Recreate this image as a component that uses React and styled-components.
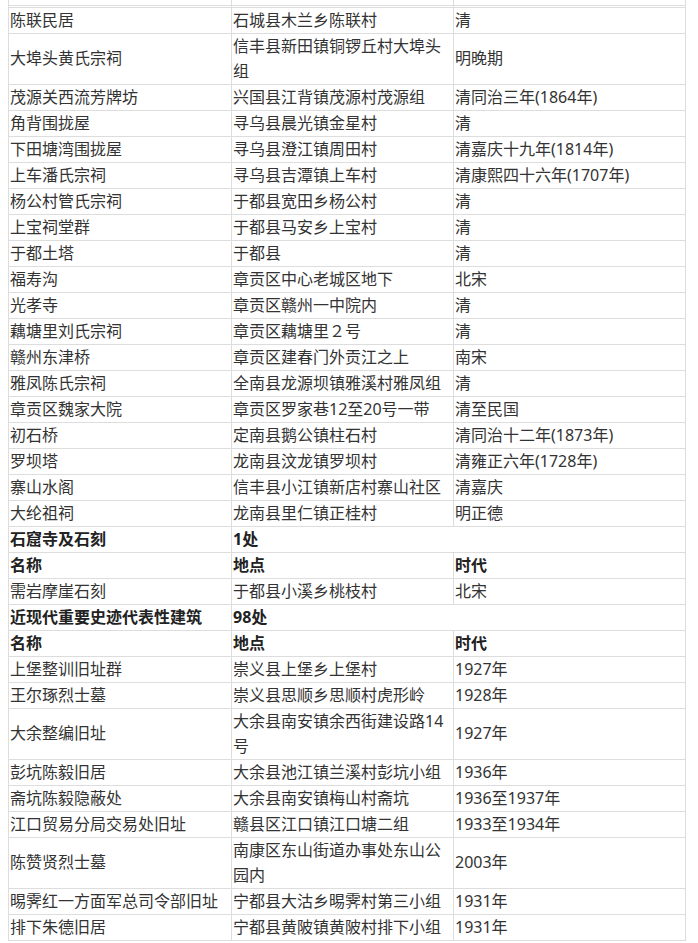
import styled, { createGlobalStyle } from "styled-components";

const GlobalStyle = createGlobalStyle`
  html, body {
    margin: 0;
    padding: 0;
    background: #fff;
  }
  body {
    font-family: "Noto Sans", "Noto Sans CJK SC", sans-serif;
    color: #333;
  }
`;

const Page = styled.div`
  padding: 0 13px 0 8px;
`;

const Table = styled.table`
  width: 677px;
  border-collapse: collapse;
  table-layout: fixed;
  font-size: 16px;
  line-height: 25px;
`;

const Cell = styled.td`
  border: 1px solid #ddd;
  padding: 0 0 0 1px;
  vertical-align: middle;
  font-weight: ${(p) => (p.$bold ? 700 : 400)};
  color: ${(p) => (p.$bold ? "#222" : "#333")};
  word-break: break-all;
`;

const StubRow = styled.tr`
  height: ${(p) => p.$h}px;
  td {
    border: 1px solid #ddd;
    border-top: none;
    padding: 0;
    line-height: 0;
  }
`;

const firstGroup = [
  ["陈联民居", "石城县木兰乡陈联村", "清"],
  ["大埠头黄氏宗祠", "信丰县新田镇铜锣丘村大埠头组", "明晚期"],
  ["茂源关西流芳牌坊", "兴国县江背镇茂源村茂源组", "清同治三年(1864年)"],
  ["角背围拢屋", "寻乌县晨光镇金星村", "清"],
  ["下田塘湾围拢屋", "寻乌县澄江镇周田村", "清嘉庆十九年(1814年)"],
  ["上车潘氏宗祠", "寻乌县吉潭镇上车村", "清康熙四十六年(1707年)"],
  ["杨公村管氏宗祠", "于都县宽田乡杨公村", "清"],
  ["上宝祠堂群", "于都县马安乡上宝村", "清"],
  ["于都土塔", "于都县", "清"],
  ["福寿沟", "章贡区中心老城区地下", "北宋"],
  ["光孝寺", "章贡区赣州一中院内", "清"],
  ["藕塘里刘氏宗祠", "章贡区藕塘里２号", "清"],
  ["赣州东津桥", "章贡区建春门外贡江之上", "南宋"],
  ["雅凤陈氏宗祠", "全南县龙源坝镇雅溪村雅凤组", "清"],
  ["章贡区魏家大院", "章贡区罗家巷12至20号一带", "清至民国"],
  ["初石桥", "定南县鹅公镇柱石村", "清同治十二年(1873年)"],
  ["罗坝塔", "龙南县汶龙镇罗坝村", "清雍正六年(1728年)"],
  ["寨山水阁", "信丰县小江镇新店村寨山社区", "清嘉庆"],
  ["大纶祖祠", "龙南县里仁镇正桂村", "明正德"],
];

const stoneGroup = [["需岩摩崖石刻", "于都县小溪乡桃枝村", "北宋"]];

const modernGroup = [
  ["上堡整训旧址群", "崇义县上堡乡上堡村", "1927年"],
  ["王尔琢烈士墓", "崇义县思顺乡思顺村虎形岭", "1928年"],
  ["大余整编旧址", "大余县南安镇余西街建设路14号", "1927年"],
  ["彭坑陈毅旧居", "大余县池江镇兰溪村彭坑小组", "1936年"],
  ["斋坑陈毅隐蔽处", "大余县南安镇梅山村斋坑", "1936至1937年"],
  ["江口贸易分局交易处旧址", "赣县区江口镇江口塘二组", "1933至1934年"],
  ["陈赞贤烈士墓", "南康区东山街道办事处东山公园内", "2003年"],
  ["晹霁红一方面军总司令部旧址", "宁都县大沽乡晹霁村第三小组", "1931年"],
  ["排下朱德旧居", "宁都县黄陂镇黄陂村排下小组", "1931年"],
];

const Rows = ({ items }) =>
  items.map((r) => (
    <tr key={r[0]}>
      <Cell>{r[0]}</Cell>
      <Cell>{r[1]}</Cell>
      <Cell>{r[2]}</Cell>
    </tr>
  ));

const Section = ({ title, count }) => (
  <>
    <tr>
      <Cell $bold>{title}</Cell>
      <Cell $bold colSpan={2}>
        {count}
      </Cell>
    </tr>
    <tr>
      <Cell $bold>名称</Cell>
      <Cell $bold>地点</Cell>
      <Cell $bold>时代</Cell>
    </tr>
  </>
);

export default function App() {
  return (
    <Page>
      <GlobalStyle />
      <Table>
        <colgroup>
          <col style={{ width: 223 }} />
          <col style={{ width: 222 }} />
          <col style={{ width: 232 }} />
        </colgroup>
        <tbody>
          <StubRow $h={5}>
            <td />
            <td />
            <td />
          </StubRow>
          <StubRow $h={2}>
            <td />
            <td />
            <td />
          </StubRow>
          <Rows items={firstGroup} />
          <Section title="石窟寺及石刻" count="1处" />
          <Rows items={stoneGroup} />
          <Section title="近现代重要史迹代表性建筑" count="98处" />
          <Rows items={modernGroup} />
        </tbody>
      </Table>
    </Page>
  );
}
